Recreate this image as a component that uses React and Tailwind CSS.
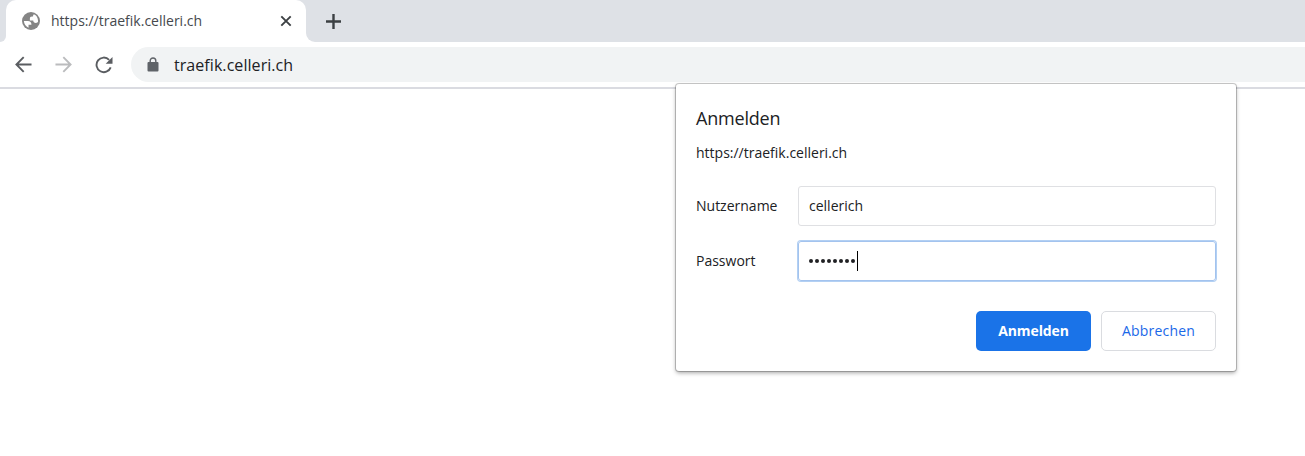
function Globe() {
  return (
    <svg viewBox="0 0 16 16" className="size-[18px] shrink-0">
      <circle cx="8" cy="8" r="8" fill="#858585" />
      <path
        fill="#fff"
        d="M1.700 8.100h3.500c2.100 0 3.200 1.100 3.200 3.200H5.800v2.600C3.400 13 1.700 10.700 1.700 8.100zM14.300 8.400c-.4.9-1 1.300-1.900 1.300-1.600 0-2.400-.8-2.400-2.200H7V5.900c0-1.200.6-1.800 1.900-1.800h.9c0-.9.2-1.400.8-2 2.200.9 3.700 3.200 3.700 6.300z"
      />
    </svg>
  );
}

function Arrow({ className }) {
  return (
    <svg viewBox="0 0 18 18" fill="none" stroke="currentColor" strokeWidth="2" className={className}>
      <path d="M17.500 9H2M9.200 1.200 1.500 9l7.700 7.800" />
    </svg>
  );
}

function Reload() {
  return (
    <svg viewBox="0 0 18 18" className="size-[18px]">
      <path d="M15.700 11.400A7.300 7.300 0 1 1 14.100 3.800" fill="none" stroke="currentColor" strokeWidth="1.900" />
      <path d="M17.500 1v6.800h-6.800z" fill="currentColor" />
    </svg>
  );
}

function Lock() {
  return (
    <svg viewBox="0 0 12 15" className="h-[15px] w-[12px] text-[#5f6368]">
      <path d="M3.200 6V3.800a2.800 2.800 0 0 1 5.600 0V6" fill="none" stroke="currentColor" strokeWidth="1.400" />
      <rect x="0.500" y="5" width="11" height="9.500" rx="1" fill="currentColor" />
    </svg>
  );
}

function Field({ label, focused, children }) {
  return (
    <div className="flex h-10 items-center">
      <label className="w-[102px] text-[14px] leading-5">{label}</label>
      <div
        className={
          focused
            ? "flex h-10 w-[418px] items-center rounded-[3px] border border-[#a3c3ee] px-[10px] shadow-[0_0_0_1px_#b3d0f3]"
            : "flex h-10 w-[418px] items-center rounded-[3px] border border-[#dfe0e3] px-[10px]"
        }
      >
        {children}
      </div>
    </div>
  );
}

export default function App() {
  return (
    <div className="relative h-[456px] w-[1305px] overflow-hidden bg-white font-['Open_Sans','Noto_Sans',sans-serif] text-[#202124]">
      <div className="flex h-[42px] bg-[#dee1e6]">
        <div className="h-full w-[6px] bg-white">
          <div className="h-full rounded-br-[6px] bg-[#dee1e6]" />
        </div>
        <div className="flex h-full w-[300px] items-center rounded-t-[10px] bg-white pl-4 pr-[14px]">
          <Globe />
          <span className="ml-[11px] flex-1 whitespace-nowrap text-[14px] leading-5 text-[#45494d]">https://traefik.celleri.ch</span>
          <svg viewBox="0 0 12 12" stroke="currentColor" strokeWidth="1.900" className="size-3 text-[#3c4043]">
            <path d="m1.300 1.300 9.400 9.400M10.700 1.300l-9.400 9.400" />
          </svg>
        </div>
        <div className="flex-1 bg-white">
          <div className="flex h-full items-center rounded-bl-[9px] bg-[#dee1e6] pl-5">
            <svg viewBox="0 0 15 15" stroke="currentColor" strokeWidth="2.400" className="size-[15px] text-[#3c4043]">
              <path d="M7.500 0v15M0 7.500h15" />
            </svg>
          </div>
        </div>
      </div>
      <div className="flex h-[47px] border-b-2 border-[#dadbe1] pl-[15px] pt-[5px]">
        <div className="flex h-[35px] w-[116px] items-center gap-[23px] text-[#5a5d61]">
          <Arrow className="size-[17px]" />
          <Arrow className="size-[17px] rotate-180 text-[#bbbcbe]" />
          <Reload />
        </div>
        <div className="flex h-[35px] flex-1 items-center rounded-l-full bg-[#f1f3f4] pl-4">
          <Lock />
          <span className="ml-[15px] text-[16px] leading-6 tracking-[0.06px]">traefik.celleri.ch</span>
        </div>
      </div>

      <div className="absolute left-[676px] top-[84px] flex h-[287px] w-[560px] flex-col rounded-[3px] bg-white px-5 pt-[21px] shadow-[0_0_0_1px_rgba(0,0,0,0.2),0_2px_4px_rgba(0,0,0,0.35)]">
        <h1 className="text-[18px] leading-[26px] tracking-[-0.2px]">Anmelden</h1>
        <p className="mt-[12px] text-[14px] leading-5">https://traefik.celleri.ch</p>
        <div className="mt-[23px] flex flex-col gap-[15px]">
          <Field label="Nutzername">
            <span className="pb-px text-[14px] leading-5">cellerich</span>
          </Field>
          <Field label="Passwort" focused>
            <div className="flex gap-[2px]">
              {Array.from({ length: 8 }, (_, i) => (
                <span key={i} className="size-1 rounded-full bg-[#202124]" />
              ))}
            </div>
            <span className="ml-0.5 h-5 w-px bg-black" />
          </Field>
        </div>
        <div className="mt-[30px] flex justify-end gap-[10px] text-[14px]">
          <button className="h-10 w-[115px] rounded-[5px] bg-[#1a73e8] pb-[2px] font-bold tracking-[-0.100px] text-white">Anmelden</button>
          <button className="h-10 w-[115px] rounded-[5px] border border-[#dadce0] pb-[2px] font-medium tracking-[0.200px] text-[#1a68e8]">Abbrechen</button>
        </div>
      </div>
    </div>
  );
}
